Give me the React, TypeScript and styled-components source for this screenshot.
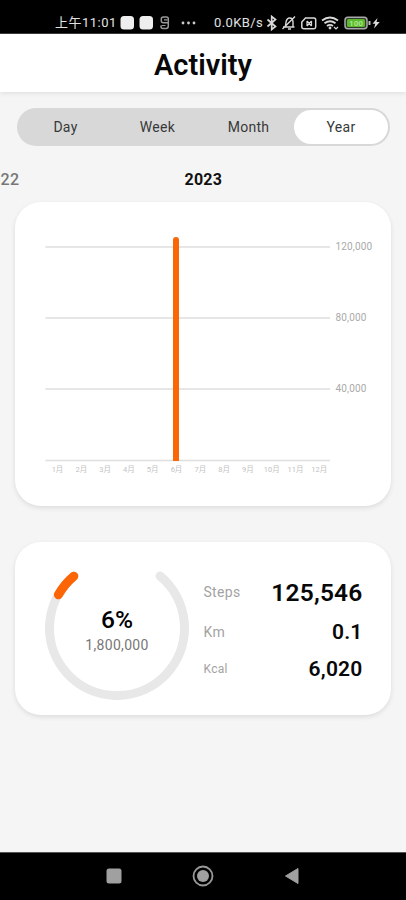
import React from "react";
import styled, { createGlobalStyle } from "styled-components";

const Global = createGlobalStyle`
  * { box-sizing: border-box; }
  body { margin: 0; background: #f5f5f5; font-family: Roboto, "Noto Sans CJK SC", sans-serif; }
`;

const Screen = styled.div`
  width: 406px;
  height: 900px;
  overflow: hidden;
  display: flex;
  flex-direction: column;
  background: #f5f5f5;
`;

const StatusBar = styled.div`
  height: 34px;
  flex: none;
  background: #000;
  border-bottom: 1px solid #3c3c3c;
  display: flex;
  align-items: flex-start;
  padding: 15px 25px 0 55px;
  color: #e2e2e2;
  svg { display: block; flex: none; }
`;

const StatusText = styled.span<{ $width: number; $spacing: number }>`
  width: ${(p) => p.$width}px;
  font-size: 13px;
  line-height: 16px;
  font-weight: 400;
  letter-spacing: ${(p) => p.$spacing}px;
  white-space: nowrap;
`;

const StatusGroup = styled.div`
  display: flex;
`;

const Spacer = styled.div`
  flex: 1;
`;

const Header = styled.header`
  height: 58px;
  flex: none;
  background: #fff;
  display: flex;
  align-items: center;
  justify-content: center;
  box-shadow: 0 1px 5px rgba(0, 0, 0, 0.1);
  padding-top: 3px;
`;

const Title = styled.h1`
  margin: 0;
  font-size: 29px;
  line-height: 34px;
  font-weight: 600;
  color: #080808;
`;

const Segments = styled.nav`
  height: 38px;
  flex: none;
  margin: 16px 16px 0 17px;
  padding: 2px;
  border-radius: 19px;
  background: #d8d8d8;
  display: grid;
  grid-template-columns: 93px 91px 91px 94px;
`;

const Segment = styled.button<{ $active?: boolean }>`
  border: 0;
  padding: 0;
  border-radius: 17px;
  font: 400 14px/34px Roboto, sans-serif;
  letter-spacing: 0.3px;
  color: #383838;
  background: ${(p) => (p.$active ? "#fff" : "transparent")};
`;

const Years = styled.div`
  height: 56px;
  flex: none;
  display: grid;
  grid-template-columns: 1fr 38px 1fr;
  align-items: center;
  padding-top: 11px;
`;

const YearLabel = styled.span<{ $current?: boolean }>`
  font-size: 16px;
  line-height: 20px;
  font-weight: ${(p) => (p.$current ? 700 : 500)};
  color: ${(p) => (p.$current ? "#111" : "#777")};
  letter-spacing: 0.2px;
  margin-left: ${(p) => (p.$current ? 0.5 : -18)}px;
`;

const Card = styled.section<{ $height: number; $top?: number }>`
  height: ${(p) => p.$height}px;
  flex: none;
  margin: ${(p) => p.$top ?? 0}px 15px 0;
  border-radius: 26px;
  background: #fff;
  box-shadow: 0 2px 5px rgba(0, 0, 0, 0.1);
  display: flex;
`;

const Chart = styled.svg`
  display: block;
  width: 376px;
  height: 304px;
  font-family: Roboto, "Noto Sans CJK SC", sans-serif;
`;

const Gauge = styled.div`
  width: 144px;
  height: 144px;
  margin: 14px 0 0 30px;
  display: grid;
  flex: none;
  > * { grid-area: 1 / 1; }
`;

const GaugeLabel = styled.div`
  display: flex;
  flex-direction: column;
  align-items: center;
  padding-top: 49px;
`;

const Percent = styled.strong`
  font-size: 24.5px;
  line-height: 30px;
  font-weight: 500;
  color: #000;
`;

const Goal = styled.span`
  font-size: 14px;
  line-height: 21px;
  letter-spacing: 0.3px;
  color: #777;
`;

const Stats = styled.dl`
  flex: 1;
  margin: 30px 28.5px 0 14.5px;
  display: grid;
  grid-template-rows: 40px 39px 35px;
`;

const Stat = styled.div`
  display: flex;
  justify-content: space-between;
  align-items: center;
`;

const StatLabel = styled.dt<{ $size: number }>`
  font-size: ${(p) => p.$size}px;
  letter-spacing: 0.3px;
  color: #a3a3a3;
`;

const StatValue = styled.dd<{ $size: number }>`
  margin: 0;
  font-size: ${(p) => p.$size}px;
  font-weight: 600;
  letter-spacing: 0.2px;
  color: #080808;
`;

const NavBar = styled.footer`
  height: 48px;
  flex: none;
  margin-top: auto;
  background: #000;
  border-top: 1px solid #555;
  display: flex;
  align-items: center;
  justify-content: space-between;
  padding: 0 106px 1px 106px;
  svg { display: block; }
`;

const gridLines = [
  { y: 45, label: "120,000" },
  { y: 116, label: "80,000" },
  { y: 187, label: "40,000" },
  { y: 258.5, label: "" },
];

const months = Array.from({ length: 12 }, (_, i) => `${i + 1}月`);

const YearChart = () => (
  <Chart viewBox="0 0 376 304">
    {gridLines.map(({ y, label }) => (
      <g key={y}>
        <line x1="30.5" x2="315" y1={y} y2={y} stroke="#dedede" strokeWidth="1.4" />
        <text x="320.5" y={y + 3} fontSize="10" letterSpacing="0.15" fill="#aaa">{label}</text>
      </g>
    ))}
    <path d="M158 259V38a3 3 0 0 1 6 0V259z" fill="#f96707" />
    {months.map((m, i) => (
      <text key={m} x={42.5 + i * 23.8} y="269.5" fontSize="7.5" fill="#c2c2c2" textAnchor="middle">{m}</text>
    ))}
  </Chart>
);

const stats = [
  { label: "Steps", value: "125,546", labelSize: 14, size: 24.5 },
  { label: "Km", value: "0.1", labelSize: 14, size: 21 },
  { label: "Kcal", value: "6,020", labelSize: 12, size: 21 },
];

export default function App() {
  return (
    <Screen>
      <Global />
      <StatusBar>
        <StatusText $width={65} $spacing={0.5}>上午11:01</StatusText>
        <svg width="78" height="16" viewBox="0 0 78 16">
          <rect x="0.5" y="1" width="13.5" height="13.5" rx="3.5" fill="#eee" />
          <rect x="19.5" y="1" width="13.5" height="13.5" rx="3.5" fill="#eee" />
          <g fill="none" stroke="#999" strokeWidth="1.5">
            <path d="M43.300 2H46.500Q48.300 2 48.300 4V11Q48.300 13.500 46 13.500H43Q41 13.500 41 11.500V10.500M48 7.800H43.300Q41.300 7.800 41.300 5.800V4Q41.300 2 43.300 2" />
            <path d="M44 4.800H47.500M41.500 10.500H45.500" strokeWidth="1.200" />
          </g>
          <g fill="#ccc">
            <circle cx="63" cy="8" r="1.400" />
            <circle cx="68.500" cy="8" r="1.400" />
            <circle cx="74" cy="8" r="1.400" />
          </g>
        </svg>
        <Spacer />
        <StatusGroup>
          <StatusText $width={51} $spacing={0.4}>0.0KB/s</StatusText>
          <svg width="116" height="17" viewBox="265 15 116 17" fill="none" stroke="#d8d8d8" strokeWidth="1.5">
            <path d="M267.500 19.500L275.500 26.500L271.700 29.500V16.500L275.500 19.500L267.500 26.500" strokeWidth="1.700" />
            <path d="M283 27H294.500M285.200 26.500C286.500 23 285 19 289 18C292 17.500 293 20 293 22V26.500M288 29H291M295 16.500L282.500 29" strokeWidth="1.400" />
            <path d="M305.500 18H314Q315.700 18 315.700 20V27Q315.700 28.700 314 28.700H304Q301.800 28.700 301.800 27V22Z" />
            <path d="M307 21L311.500 26M311.500 21L307 26M307 21V26M311.500 21V26" strokeWidth="1.200" />
            <path d="M322 20.500Q330 14.500 338 20.500M324.500 23.300Q330 19 335.500 23.300M327 26Q330 23.800 333 26" strokeWidth="1.900" />
            <circle cx="330" cy="28" r="1.400" fill="#d8d8d8" stroke="none" />
            <path d="M334 27L336 29L338 27" strokeWidth="1.200" />
            <rect x="345" y="17.300" width="22" height="11.500" rx="3" fill="#303a2b" stroke="#aaa" strokeWidth="1.500" />
            <rect x="347" y="19" width="18" height="8" rx="1.500" fill="#5cb82f" stroke="none" />
            <path d="M369.500 21V25" stroke="#bbb" strokeWidth="2" />
            <path d="M377.500 18L372.500 23.800H375.300L374 28.500L379.700 22H376.500Z" fill="#ddd" stroke="none" />
            <text x="356" y="26" fill="#a9e886" stroke="none" fontSize="8" fontWeight="700" textAnchor="middle">100</text>
          </svg>
        </StatusGroup>
      </StatusBar>

      <Header><Title>Activity</Title></Header>

      <Segments>
        <Segment>Day</Segment>
        <Segment>Week</Segment>
        <Segment>Month</Segment>
        <Segment $active>Year</Segment>
      </Segments>

      <Years>
        <YearLabel>2022</YearLabel>
        <YearLabel $current>2023</YearLabel>
      </Years>

      <Card $height={304}><YearChart /></Card>

      <Card $height={173} $top={36}>
        <Gauge>
          <svg width="144" height="144" viewBox="0 0 144 144" fill="none" strokeWidth="9" strokeLinecap="round">
            <path d="M29 20A67.500 67.500 0 1 0 115 20" stroke="#e8e8e8" />
            <path d="M28.800 20.200A67.500 67.500 0 0 0 13.400 38.800" stroke="#fb6505" />
          </svg>
          <GaugeLabel>
            <Percent>6%</Percent>
            <Goal>1,800,000</Goal>
          </GaugeLabel>
        </Gauge>
        <Stats>
          {stats.map((s) => (
            <Stat key={s.label}>
              <StatLabel $size={s.labelSize}>{s.label}</StatLabel>
              <StatValue $size={s.size}>{s.value}</StatValue>
            </Stat>
          ))}
        </Stats>
      </Card>

      <NavBar>
        <svg width="16" height="16"><rect x="0.500" y="0.500" width="15" height="15" rx="2.500" fill="#a0a0a0" /></svg>
        <svg width="22" height="22">
          <circle cx="11" cy="11" r="9.500" fill="none" stroke="#999" strokeWidth="1.800" />
          <circle cx="11" cy="11" r="6" fill="#a0a0a0" />
        </svg>
        <svg width="16" height="18"><path d="M1.500 9L14 1.500V16.500Z" fill="#a0a0a0" stroke="#a0a0a0" strokeLinejoin="round" /></svg>
      </NavBar>
    </Screen>
  );
}
